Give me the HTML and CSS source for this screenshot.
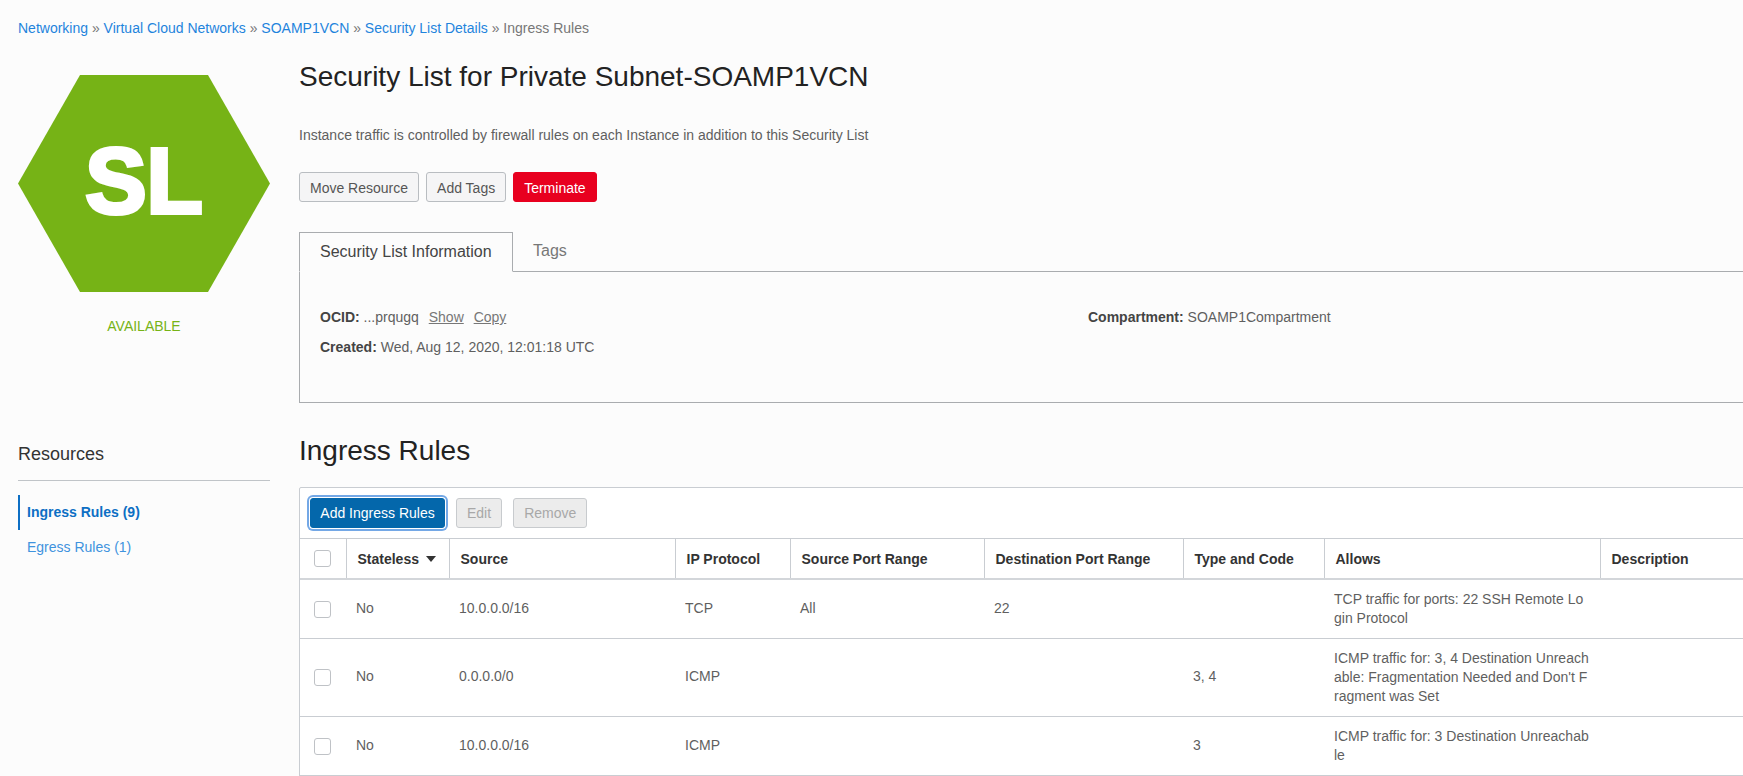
FILE: index.html
```html
<!DOCTYPE html>
<html lang="en">
<head>
    <meta charset="UTF-8">
    <title>Security List Details</title>
    <link rel="stylesheet" href="styles.css">
</head>
<body>

<nav class="breadcrumbs">
    <a href="#">Networking</a> » <a href="#">Virtual Cloud Networks</a> » <a href="#">SOAMP1VCN</a> » <a href="#">Security List Details</a> » Ingress Rules
</nav>

<div class="top-section">
    <div class="status-col">
        <div class="hex">
            <svg class="hex-shape" width="252" height="217" viewBox="0 0 252 217">
                <polygon points="62,0 190,0 252,108.5 190,217 62,217 0,108.5" fill="#76b316"/>
            </svg>
            <span class="hex-text">SL</span>
        </div>
        <div class="status-text">AVAILABLE</div>
    </div>

    <div class="details-col">
        <h1 class="page-title">Security List for Private Subnet-SOAMP1VCN</h1>
        <p class="page-desc">Instance traffic is controlled by firewall rules on each Instance in addition to this Security List</p>
        <div class="actions">
            <button class="btn">Move Resource</button>
            <button class="btn">Add Tags</button>
            <button class="btn btn-danger">Terminate</button>
        </div>

        <div class="tabs">
            <div class="tab tab-active">Security List Information</div>
            <div class="tab">Tags</div>
        </div>
        <div class="tab-panel">
            <div class="info-col">
                <div class="info-row"><b>OCID:</b> ...prqugq <a class="info-link" href="#">Show</a> <a class="info-link" href="#">Copy</a></div>
                <div class="info-row"><b>Created:</b> Wed, Aug 12, 2020, 12:01:18 UTC</div>
            </div>
            <div class="info-col">
                <div class="info-row"><b>Compartment:</b> SOAMP1Compartment</div>
            </div>
        </div>
    </div>
</div>

<div class="bottom-section">
    <aside class="resources">
        <h3 class="resources-title">Resources</h3>
        <ul class="resources-nav">
            <li class="nav-active"><a href="#">Ingress Rules (9)</a></li>
            <li><a href="#">Egress Rules (1)</a></li>
        </ul>
    </aside>

    <div class="rules">
        <h2 class="rules-title">Ingress Rules</h2>
        <div class="table-box">
            <div class="toolbar">
                <button class="btn btn-primary">Add Ingress Rules</button>
                <button class="btn btn-disabled">Edit</button>
                <button class="btn btn-disabled">Remove</button>
            </div>
            <table class="rules-table">
                <colgroup>
                    <col class="col-check">
                    <col class="col-stateless">
                    <col class="col-source">
                    <col class="col-protocol">
                    <col class="col-srcport">
                    <col class="col-dstport">
                    <col class="col-type">
                    <col class="col-allows">
                    <col class="col-desc">
                </colgroup>
                <thead>
                    <tr>
                        <th><input type="checkbox"></th>
                        <th>Stateless <span class="caret"></span></th>
                        <th>Source</th>
                        <th>IP Protocol</th>
                        <th>Source Port Range</th>
                        <th>Destination Port Range</th>
                        <th>Type and Code</th>
                        <th>Allows</th>
                        <th>Description</th>
                    </tr>
                </thead>
                <tbody>
                    <tr>
                        <td><input type="checkbox"></td>
                        <td>No</td>
                        <td>10.0.0.0/16</td>
                        <td>TCP</td>
                        <td>All</td>
                        <td>22</td>
                        <td></td>
                        <td class="cell-allows">TCP traffic for ports: 22 SSH Remote Login Protocol</td>
                        <td></td>
                    </tr>
                    <tr>
                        <td><input type="checkbox"></td>
                        <td>No</td>
                        <td>0.0.0.0/0</td>
                        <td>ICMP</td>
                        <td></td>
                        <td></td>
                        <td>3, 4</td>
                        <td class="cell-allows">ICMP traffic for: 3, 4 Destination Unreachable: Fragmentation Needed and Don't Fragment was Set</td>
                        <td></td>
                    </tr>
                    <tr>
                        <td><input type="checkbox"></td>
                        <td>No</td>
                        <td>10.0.0.0/16</td>
                        <td>ICMP</td>
                        <td></td>
                        <td></td>
                        <td>3</td>
                        <td class="cell-allows">ICMP traffic for: 3 Destination Unreachable</td>
                        <td></td>
                    </tr>
                </tbody>
            </table>
        </div>
    </div>
</div>

</body>
</html>
```

FILE: styles.css
```css
html, body {
    height: 776px;
    overflow: hidden;
}
body {
    margin: 0;
    background-color: #fcfcfc;
    color: #5f5f5f;
    font-family: "Liberation Sans", Arial, sans-serif;
    font-size: 14px;
}
a {
    color: #1f84dc;
    text-decoration: none;
}

.breadcrumbs {
    padding: 19px 18px 0;
    height: 18px;
    line-height: 18px;
    color: #777;
}

/* header area */
.top-section, .bottom-section {
    display: grid;
    grid-template-columns: 252px 1600px;
    column-gap: 29px;
    padding-left: 18px;
}
.top-section {
    margin-top: 38px;
}
.status-col {
    text-align: center;
}
.hex {
    display: grid;
    place-items: center;
    height: 217px;
}
.hex-shape, .hex-text {
    grid-area: 1 / 1;
}
.hex-text {
    margin-bottom: 5px;
    color: #fff;
    font-size: 92px;
    font-weight: bold;
    line-height: 1;
    -webkit-text-stroke: 4px #fff;
}
.status-text {
    margin-top: 25px;
    line-height: 18px;
    color: #76b316;
}
.page-title {
    margin: -15px 0 0;
    font-size: 28px;
    font-weight: normal;
    line-height: 34px;
    color: #222;
}
.page-desc {
    margin: 32px 0 0;
    line-height: 18px;
}
.actions {
    display: flex;
    gap: 7px;
    margin-top: 28px;
}
.btn {
    height: 30px;
    padding: 1px 10px 0;
    border: 1px solid #b9bdc1;
    border-radius: 3px;
    background-color: #f5f5f6;
    color: #555;
    font-family: inherit;
    font-size: 14px;
}
.btn-danger {
    border-color: #e8001f;
    background-color: #e8001f;
    color: #fff;
}
.btn-primary {
    border-color: #0467ab;
    background-color: #0467ab;
    color: #fff;
    box-shadow: 0 0 0 1px #fff, 0 0 0 3px #74a8e6;
}
.btn-disabled {
    background-color: #ececec;
    border-color: #c8cbce;
    color: #a8a8a8;
}

/* tabs */
.tabs {
    display: flex;
    margin-top: 30px;
    border-bottom: 1px solid #a9acaf;
    height: 39px;
}
.tab {
    padding: 0 20px;
    font-size: 16px;
    line-height: 38px;
    color: #777;
}
.tab-active {
    line-height: 36px;
    padding-top: 1px;
    box-sizing: border-box;
    border: 1px solid #a9acaf;
    border-bottom-color: #fcfcfc;
    width: 214px;
    height: 40px;
    color: #444;
}
.tab-panel {
    display: grid;
    grid-template-columns: 768px 1fr;
    height: 131px;
    padding-left: 20px;
    box-sizing: border-box;
    border-left: 1px solid #a9acaf;
    border-bottom: 1px solid #a9acaf;
}
.info-col {
    padding-top: 36px;
}
.info-row {
    height: 30px;
    line-height: 18px;
}
.info-row b {
    color: #444;
}
.info-link {
    margin-left: 6px;
    color: #777;
    text-decoration: underline;
}

/* resources + table */
.bottom-section {
    margin-top: 27px;
}
.resources-title {
    margin: 13px 0 0;
    padding-bottom: 15px;
    border-bottom: 1px solid #c0c4c8;
    font-size: 18px;
    font-weight: normal;
    line-height: 22px;
    color: #333;
}
.resources-nav {
    list-style: none;
    margin: 14px 0 0;
    padding: 0;
}
.resources-nav li {
    height: 35px;
    line-height: 35px;
    padding-left: 7px;
    border-left: 2px solid transparent;
}
.resources-nav a {
    color: #3f93de;
}
.resources-nav .nav-active {
    border-left-color: #0d6fc4;
    font-weight: bold;
}
.resources-nav .nav-active a {
    color: #0d6fc4;
}
.rules-title {
    margin: 0;
    padding-top: 1px;
    font-size: 28px;
    font-weight: normal;
    line-height: 40px;
    color: #222;
}
.table-box {
    margin-top: 16px;
    border: 1px solid #c9cdd2;
    border-radius: 2px 0 0 0;
    background-color: #fff;
}
.toolbar {
    display: flex;
    align-items: center;
    gap: 11px;
    height: 50px;
    padding-left: 10px;
}
.toolbar .btn {
    padding-top: 0;
}
.toolbar .btn-primary {
    width: 135px;
    padding: 0;
}
.rules-table {
    table-layout: fixed;
    width: 1600px;
    border-collapse: collapse;
}
.col-check { width: 46px; }
.col-stateless { width: 103px; }
.col-source { width: 226px; }
.col-protocol { width: 115px; }
.col-srcport { width: 194px; }
.col-dstport { width: 199px; }
.col-type { width: 141px; }
.col-allows { width: 276px; }
.rules-table th {
    height: 39px;
    padding: 0 11px;
    border-top: 1px solid #c9cdd2;
    border-left: 1px solid #c9cdd2;
    border-bottom: 2px solid #d3d6da;
    text-align: left;
    font-size: 14px;
    color: #333;
}
.rules-table th:first-child {
    border-left: none;
}
.rules-table td {
    padding: 9px 10px 11px;
    border-bottom: 1px solid #c9cdd2;
    line-height: 19px;
    word-break: break-all;
}
.rules-table .cell-allows {
    padding: 10px;
}
.rules-table th:first-child, .rules-table td:first-child {
    padding: 0 0 0 14px;
}
.rules-table input {
    appearance: none;
    display: block;
    width: 17px;
    height: 17px;
    margin: 0;
    box-sizing: border-box;
    border: 1px solid #bfc2c6;
    border-radius: 3px;
    background-color: #fff;
}
.caret {
    display: inline-block;
    margin-left: 3px;
    vertical-align: 2px;
    border-left: 5px solid transparent;
    border-right: 5px solid transparent;
    border-top: 6px solid #333;
}
```
